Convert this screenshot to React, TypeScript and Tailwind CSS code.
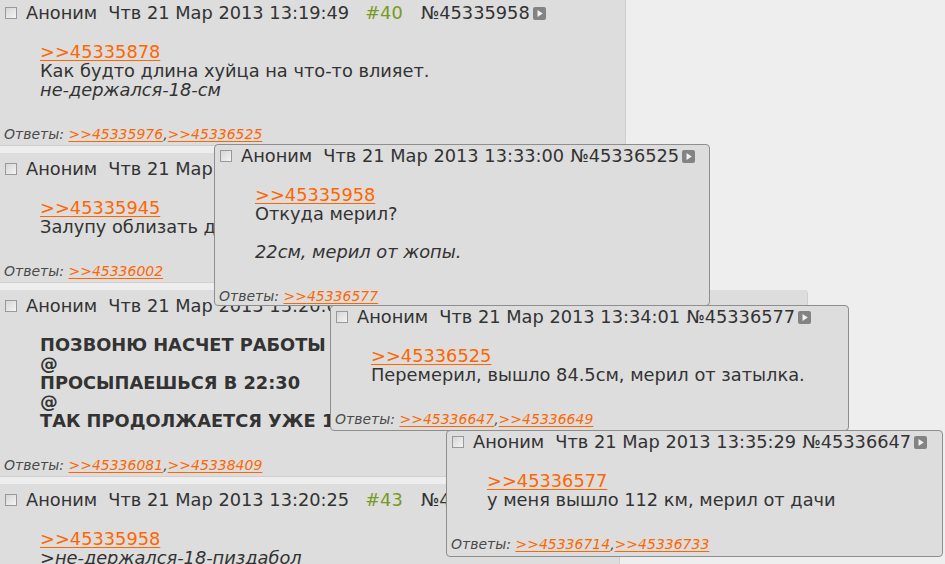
import type { ReactNode } from "react";

type Post = {
  time: string;
  idx?: number;
  num: string;
  body: ReactNode;
  replies: string[];
};

function CheckBox() {
  return (
    <span className="ml-[1px] mr-[9px] inline-block h-[12px] w-[12px] shrink-0 border border-[#999999] bg-gradient-to-br from-[#d6d6d6] to-[#f4f4f4]" />
  );
}

function PlayIcon() {
  return (
    <svg width="13" height="13" viewBox="0 0 13 13" className="ml-[3px] shrink-0">
      <rect x="0" y="0" width="13" height="13" rx="2" fill="#838383" />
      <path d="M4.5 3 L9.8 6.5 L4.5 10 Z" fill="#f2f2f2" />
    </svg>
  );
}

function Ref({ to }: { to: string }) {
  return <a className="text-[#ff6600] underline decoration-1 underline-offset-2">&gt;&gt;{to}</a>;
}

function Header({ time, idx, num }: { time: string; idx?: number; num: string }) {
  return (
    <div className="flex h-[20px] items-center whitespace-nowrap leading-[20px]">
      <CheckBox />
      <span>Аноним</span>
      <span className="ml-[11px]">Чтв 21 Мар 2013 {time}</span>
      {idx ? <span className="ml-[16px] text-[#789922]">#{idx}</span> : null}
      <span className={idx ? "ml-[18px]" : "ml-[6px]"}>№{num}</span>
      <PlayIcon />
    </div>
  );
}

function Replies({ list }: { list: string[] }) {
  return (
    <div className="mt-[26px] whitespace-nowrap text-[14px] italic leading-[18px] text-[#4a4a4a]">
      Ответы:{" "}
      {list.map((r, i) => (
        <span key={r}>
          {i > 0 && ","}
          <Ref to={r} />
        </span>
      ))}
    </div>
  );
}

function PostBody({ post }: { post: Post }) {
  return (
    <>
      <Header time={post.time} idx={post.idx} num={post.num} />
      <div className="ml-[36px] mt-[19px] whitespace-nowrap leading-[19px]">{post.body}</div>
      <Replies list={post.replies} />
    </>
  );
}

const posts: (Post & { width: string })[] = [
  {
    width: "w-[626px] -mt-[3px]",
    time: "13:19:49",
    idx: 40,
    num: "45335958",
    body: (
      <>
        <Ref to="45335878" />
        <br />
        Как будто длина хуйца на что-то влияет.
        <br />
        <em>не-держался-18-см</em>
      </>
    ),
    replies: ["45335976", "45336525"],
  },
  {
    width: "w-[626px]",
    time: "13:19:58",
    idx: 41,
    num: "45335972",
    body: (
      <>
        <Ref to="45335945" />
        <br />
        Залупу облизать дали?
      </>
    ),
    replies: ["45336002"],
  },
  {
    width: "w-[808px]",
    time: "13:20:07",
    idx: 42,
    num: "45335990",
    body: (
      <strong>
        ПОЗВОНЮ НАСЧЕТ РАБОТЫ ЗАВТРА
        <br />
        @
        <br />
        ПРОСЫПАЕШЬСЯ В 22:30
        <br />
        @
        <br />
        ТАК ПРОДОЛЖАЕТСЯ УЖЕ 1 ГОД
      </strong>
    ),
    replies: ["45336081", "45338409"],
  },
  {
    width: "w-[620px]",
    time: "13:20:25",
    idx: 43,
    num: "45336021",
    body: (
      <>
        <Ref to="45335958" />
        <br />
        <em>&gt;не-держался-18-пиздабол</em>
        <br />
        Ну-ну.
      </>
    ),
    replies: ["45336090"],
  },
];

const popups: (Post & { box: string })[] = [
  {
    box: "left-[214px] top-[144px] w-[496px] pb-0",
    time: "13:33:00",
    num: "45336525",
    body: (
      <>
        <Ref to="45335958" />
        <br />
        Откуда мерил?
        <br />
        <br />
        <em>22см, мерил от жопы.</em>
      </>
    ),
    replies: ["45336577"],
  },
  {
    box: "left-[330px] top-[305px] w-[519px] pb-[2px]",
    time: "13:34:01",
    num: "45336577",
    body: (
      <>
        <Ref to="45336525" />
        <br />
        Перемерил, вышло 84.5см, мерил от затылка.
      </>
    ),
    replies: ["45336647", "45336649"],
  },
  {
    box: "left-[446px] top-[430px] w-[497px] pb-[3px]",
    time: "13:35:29",
    num: "45336647",
    body: (
      <>
        <Ref to="45336577" />
        <br />
        у меня вышло 112 км, мерил от дачи
      </>
    ),
    replies: ["45336714", "45336733"],
  },
];

export default function App() {
  return (
    <div className="relative h-screen overflow-hidden bg-[#eeeeee] font-['DejaVu_Sans',sans-serif] text-[17.8px] text-[#333333]">
      <div className="flex flex-col items-start gap-[7px]">
        {posts.map((p) => (
          <div
            key={p.num}
            className={`${p.width} rounded-r-[4px] border-r border-b border-[#cfcfcf] bg-[#dddddd] pb-[2px] pl-[4px] pt-[6px]`}
          >
            <PostBody post={p} />
          </div>
        ))}
      </div>
      {popups.map((p) => (
        <div
          key={p.num}
          className={`absolute ${p.box} rounded-[4px] border border-[#8e8e8e] bg-[#dddddd] pl-[4px] pt-[1px]`}
        >
          <PostBody post={p} />
        </div>
      ))}
    </div>
  );
}
